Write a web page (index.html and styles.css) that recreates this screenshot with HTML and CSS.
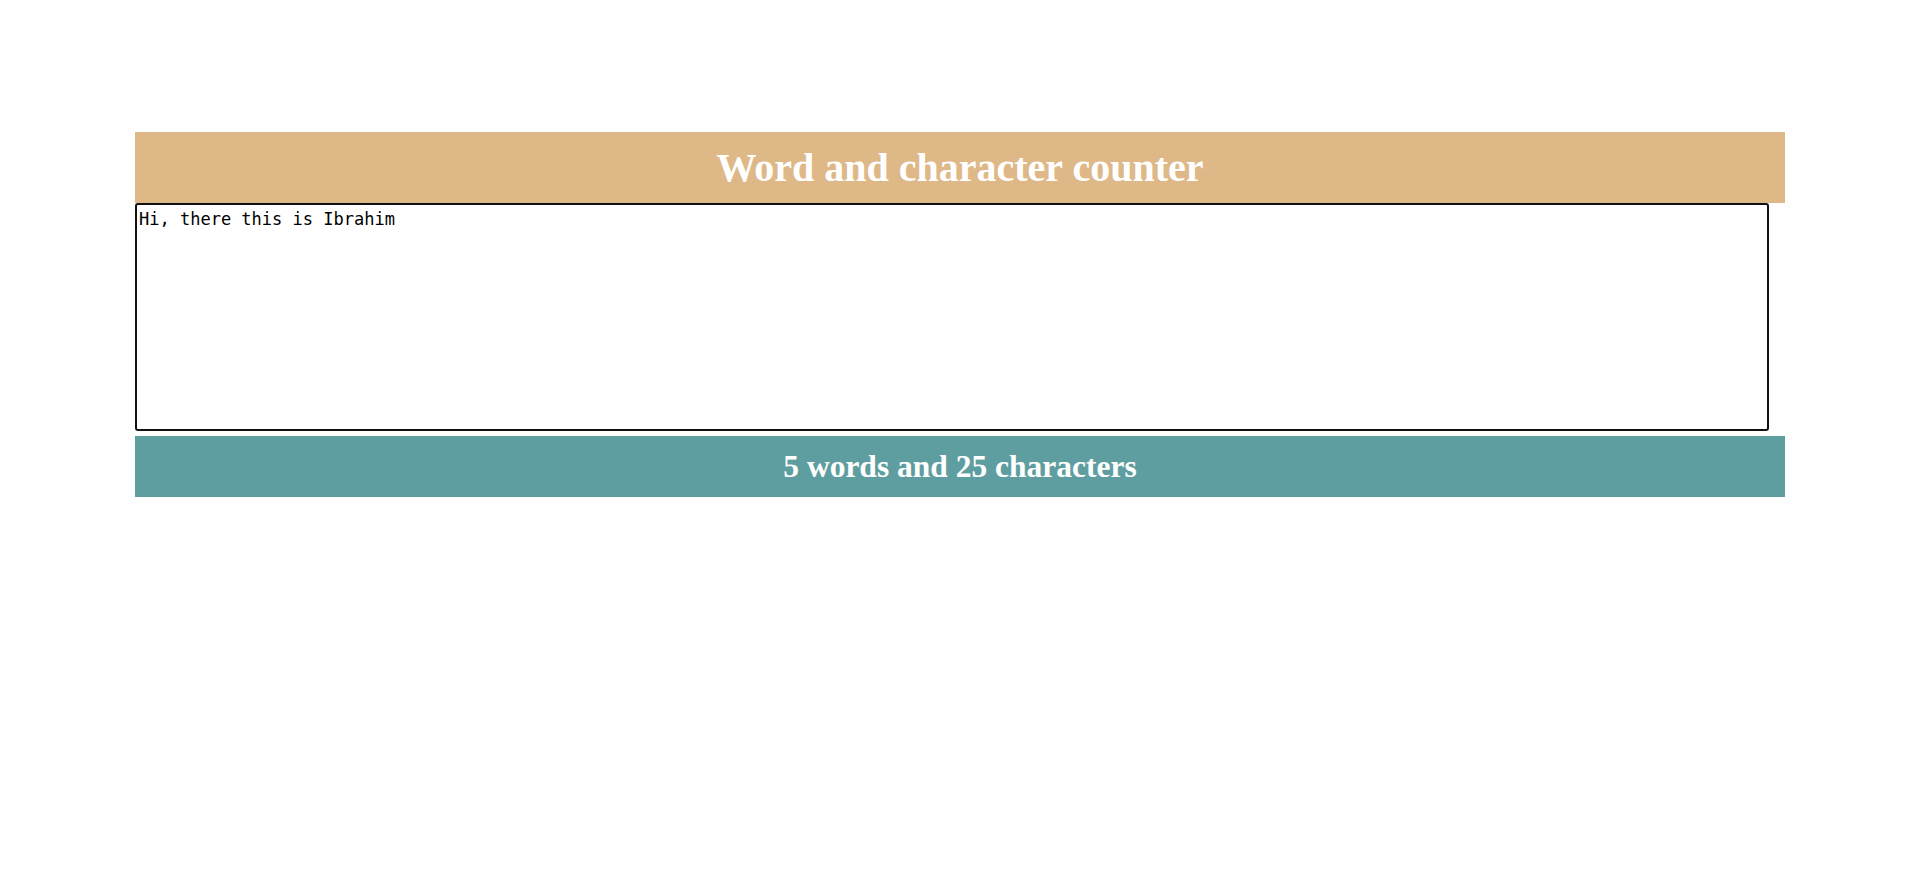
FILE: index.html
```html
<!DOCTYPE html>
<html>
<head>
<meta charset="utf-8">
<link rel="stylesheet" href="styles.css">
</head>
<body>
<div class="container">
  <h1 class="title">Word and character counter</h1>
  <textarea class="input">Hi, there this is Ibrahim</textarea>
  <div class="result">5 words and 25 characters</div>
</div>
</body>
</html>
```
FILE: styles.css
```css
html, body {
  margin: 0;
  padding: 0;
  background: #fefefe;
}
.container {
  width: 1650px;
  margin: 132px auto 0;
  font-family: "Liberation Serif", "Times New Roman", serif;
}
.title {
  margin: 0;
  height: 71px;
  background: #deb887;
  color: #fff;
  font-size: 40px;
  font-weight: bold;
  display: flex;
  align-items: center;
  justify-content: center;
}
.input {
  display: block;
  box-sizing: border-box;
  width: 1634px;
  height: 228px;
  margin: 0;
  padding: 4px 2px 3px;
  border: 2px solid #111;
  border-radius: 3px;
  font-family: "DejaVu Sans Mono", monospace;
  font-size: 17px;
  color: #000;
  resize: none;
  outline: none;
  background: #fff;
}
.result {
  margin-top: 5px;
  height: 61px;
  background: #5f9ea0;
  color: #fff;
  font-size: 31.5px;
  font-weight: bold;
  display: flex;
  align-items: center;
  justify-content: center;
}
```
